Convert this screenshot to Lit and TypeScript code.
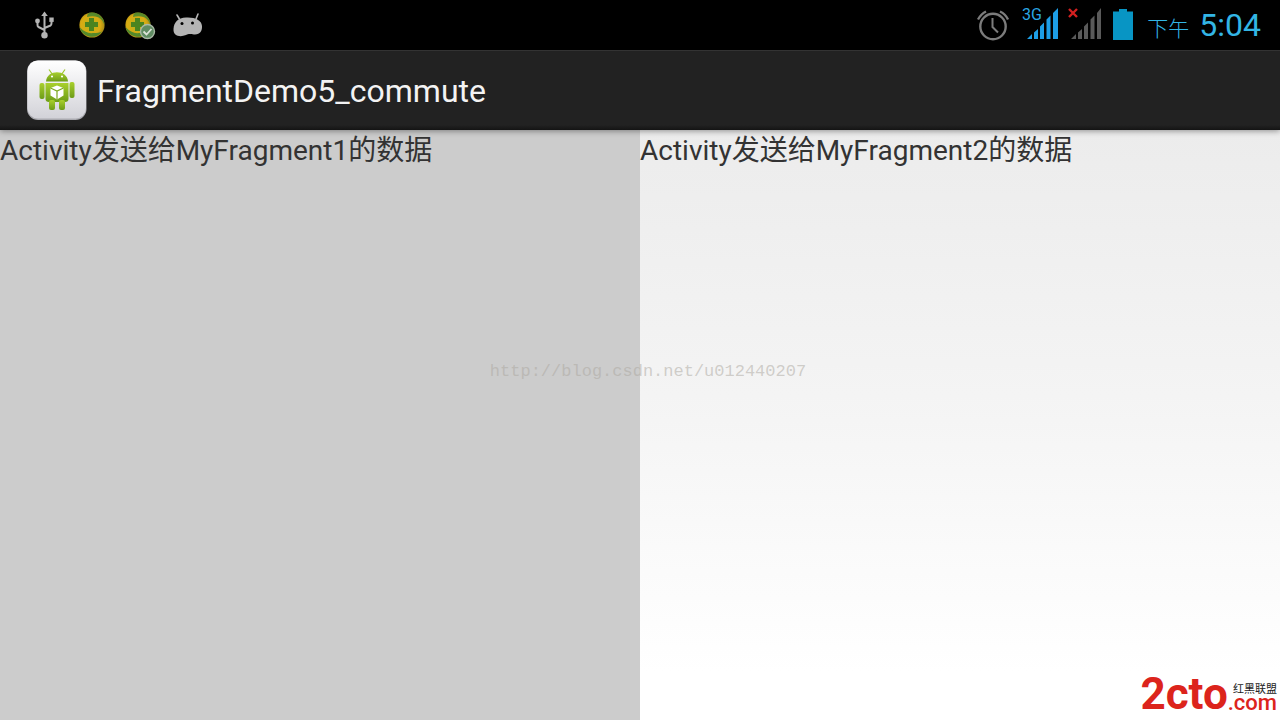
import { LitElement, html, css, svg } from "lit";
import { customElement, property } from "lit/decorators.js";

const ballIcon = svg`
  <circle cx="16" cy="16" r="12.6" fill="url(#ball)"/>
  <path d="M13 3.800A12.600 12.600 0 0 1 28.500 16Q26 8 19 7.500Q15 7 11 8Q11 5 13 3.800Z" fill="#3c8430" opacity=".8"/>
  <path d="M3.500 18Q10 25 17 24Q23 24 26 22.500A12.600 12.600 0 0 1 3.500 18Z" fill="#3c8430" opacity=".85"/>
  <path d="M13 9h5v4h4v5h-4v4h-5v-4h-4v-5h4z" fill="#4a8420"/>`;

const ballGradient = svg`
  <radialGradient id="ball" cx=".45" cy=".5" r=".55">
    <stop offset="0" stop-color="#b9b41c"/>
    <stop offset=".7" stop-color="#d9ab12"/>
    <stop offset="1" stop-color="#a58a16"/>
  </radialGradient>`;

@customElement("status-bar")
class StatusBar extends LitElement {
  static styles = css`
    :host {
      display: flex;
      align-items: center;
      justify-content: space-between;
      height: 50px;
      padding: 0 19px 0 28px;
      background: #000;
      color: #33b5e5;
    }
    .group { display: flex; align-items: center; }
    .notices { gap: 16px; }
    svg { display: block; flex: none; }
    .alarm { margin-right: 12px; }
    .mobile, .nosim { margin-right: 8px; }
    .battery { margin-right: 13px; }
    .clock {
      display: flex;
      align-items: baseline;
      gap: 10px;
      font: 32px/40px Roboto, "Noto Sans CJK SC", sans-serif;
    }
    .half { font: 300 21px/32px "Noto Sans CJK SC", sans-serif; }
  `;

  render() {
    return html`
      <div class="group notices">
        <svg width="32" height="32" viewBox="0 0 32 32" fill="none" stroke="#b4b4b4" stroke-width="2" aria-label="USB">
          <path d="M16.500 6V25M16.500 21L10.500 18Q9.500 17.500 9.500 16V12M16.500 19L22.500 16.500Q23.500 16 23.500 14V12"/>
          <path d="M16.500 2.500L19.800 7H13.200Z" fill="#b4b4b4" stroke="none"/>
          <circle cx="16.500" cy="26.200" r="3.200" fill="#b4b4b4" stroke="none"/>
          <circle cx="9.500" cy="12" r="2.400" fill="#b4b4b4" stroke="none"/>
          <path d="M21.300 8.500h4.400v4.400h-4.400z" fill="#b4b4b4" stroke="none"/>
        </svg>
        <svg width="32" height="32" viewBox="0 0 32 32"><defs>${ballGradient}</defs>${ballIcon}</svg>
        <svg width="32" height="32" viewBox="0 0 32 32">
          <defs>${ballGradient}</defs>
          <g transform="translate(-2 0)">${ballIcon}</g>
          <circle cx="23.500" cy="22.500" r="7" fill="#5f8c62" stroke="#a9b8a5" stroke-width="1.400"/>
          <path d="M19.500 22.500l3 3 5-5.500" fill="none" stroke="#dbe3d8" stroke-width="1.800"/>
        </svg>
        <svg width="32" height="32" viewBox="0 0 32 32" aria-label="Android">
          <path d="M5 6L8 11M26 5L24 10" stroke="#b4b4b4" stroke-width="1.600" stroke-linecap="round"/>
          <path d="M1.500 20C2 13 6 9 14 8.500C23 8 29.500 11 30 17C30.300 22 28 26 22 25.500C18 25 17 24.500 14 26C8 28.500 1 27 1.500 20Z" fill="#b4b4b4"/>
          <circle cx="10" cy="14.500" r="1.500"/><circle cx="20.500" cy="14" r="1.500"/>
        </svg>
      </div>
      <div class="group">
        <svg class="alarm" width="34" height="34" viewBox="0 0 34 34" fill="none" stroke="#7c7c7c" stroke-width="2.400" aria-label="Alarm">
          <circle cx="17" cy="18.500" r="12.700"/>
          <path d="M16.500 10v9l5.500 5.500" stroke-width="2"/>
          <path d="M2 11.500Q5 6 10 3.500M24 3.500Q29.500 6 32 11.500"/>
        </svg>
        <svg class="mobile" width="38" height="40" viewBox="0 -2 38 40" fill="#1d9ee6" aria-label="Signal">
          <text x="0" y="13" font-family="Roboto, sans-serif" font-size="16" fill="#2aa6e4">3G</text>
          <path d="M5 32L10 27V32ZM12 25.500l4-3.500V32H12ZM18 19.500l4-4V32h-4ZM24.500 12.500l4-4V32h-4ZM31 6l5-5V32h-5Z"/>
        </svg>
        <svg class="nosim" width="36" height="40" viewBox="0 -2 36 40" fill="#5a5a5a" aria-label="No signal">
          <path d="M3 32L8 27V32ZM10 25.500l4-3.500V32H10ZM16 19.500l4-4V32h-4ZM22.500 12.500l4-4V32h-4ZM29 6l4-5V32h-4Z"/>
          <path d="M1 2l8 8M9 2l-8 8" stroke="#d32020" stroke-width="2.400"/>
        </svg>
        <svg class="battery" width="22" height="32" viewBox="0 0 22 32" aria-label="Battery">
          <path d="M1 2.500H7V0H15V2.500H21V31H1Z" fill="#0895c4"/>
        </svg>
        <div class="clock"><span class="half">下午</span><time>5:04</time></div>
      </div>
    `;
  }
}

@customElement("action-bar")
class ActionBar extends LitElement {
  @property() heading = "";

  static styles = css`
    :host {
      display: flex;
      align-items: center;
      gap: 8px;
      box-sizing: border-box;
      height: 80px;
      padding: 0 25px;
      background: linear-gradient(#222 0 74px, #141414);
      border-top: 1px solid #333;
      box-shadow: 0 1px 6px rgba(0, 0, 0, 0.4);
      position: relative;
      z-index: 1;
    }
    svg { display: block; }
    h1 { margin: 0; color: #f3f3f3; font: 400 32px/40px Roboto, sans-serif; }
  `;

  render() {
    return html`
      <svg width="64" height="64" viewBox="0 1 64 64" aria-hidden="true">
        <defs>
          <linearGradient id="tile" x2="0" y2="1"><stop stop-color="#fff"/><stop offset="1" stop-color="#d2d2d8"/></linearGradient>
          <linearGradient id="green" x2="0" y2="1"><stop stop-color="#a9d02c"/><stop offset="1" stop-color="#6d9c18"/></linearGradient>
        </defs>
        <rect x="2" y="2.500" width="59.500" height="59.500" rx="11" fill="#aaaab0"/>
        <rect x="2.500" y="2.500" width="58.500" height="58" rx="10.500" fill="url(#tile)"/>
        <path d="M24 11.500l3.500 5M40 11.500l-3.500 5" stroke="#9cc62c" stroke-width="1.200"/>
        <g fill="url(#green)">
          <path d="M21 23.500C21.500 11 42.500 11 43 23.500Z"/>
          <path d="M20.500 25H43.500V41Q43.500 44 40 44H24Q20.500 44 20.500 41Z"/>
          <rect x="14.500" y="25" width="5" height="16" rx="2"/>
          <rect x="44.500" y="24" width="5" height="16" rx="2"/>
          <rect x="24" y="42" width="6" height="10" rx="2"/>
          <rect x="34" y="42" width="6" height="10" rx="2"/>
        </g>
        <circle cx="27" cy="18.500" r="1.100" fill="#fff"/><circle cx="37" cy="18.500" r="1.100" fill="#fff"/>
        <path d="M32 27.500L38.500 30V37.500L32 41.500L25.500 37.500V30Z" fill="#fff"/>
        <path d="M25.500 30L32 33L38.500 30M32 33V41.500" fill="none" stroke="#7da820" stroke-width="1.200"/>
      </svg>
      <h1>${this.heading}</h1>
    `;
  }
}

@customElement("app-root")
class AppRoot extends LitElement {
  static styles = css`
    :host {
      display: flex;
      flex-direction: column;
      min-height: 100vh;
      position: relative;
      overflow: hidden;
      background: #fff;
    }
    main { flex: 1; display: grid; grid-template-columns: 1fr 1fr; }
    .pane {
      color: #333;
      font: 28px/33px Roboto, "Noto Sans CJK SC", sans-serif;
      padding-top: 4px;
      background: linear-gradient(#ececec, #f4f4f4 45%, #fff 92%);
    }
    .pane.first { background: #ccc; }
    p { margin: 0; }
    .watermark {
      position: absolute;
      top: 362px;
      left: 0;
      right: 0;
      padding-left: 16px;
      text-align: center;
      font: 17px/20px "Liberation Mono", monospace;
      color: rgba(170, 166, 158, 0.5);
    }
    .brand {
      position: absolute;
      right: 3px;
      bottom: 8px;
      display: flex;
      align-items: flex-end;
      color: #dc241c;
      font-family: Roboto, sans-serif;
    }
    .big { font-size: 44px; line-height: 36px; font-weight: 700; }
    .side { display: flex; flex-direction: column; align-items: flex-end; }
    .cn { color: #222; font: 11px/12px "Noto Sans CJK SC", sans-serif; }
    .com { font-size: 22px; line-height: 18px; font-weight: 500; }
  `;

  render() {
    return html`
      <status-bar></status-bar>
      <action-bar heading="FragmentDemo5_commute"></action-bar>
      <main>
        <section class="pane first"><p>Activity发送给MyFragment1的数据</p></section>
        <section class="pane"><p>Activity发送给MyFragment2的数据</p></section>
      </main>
      <div class="watermark">http://blog.csdn.net/u012440207</div>
      <div class="brand">
        <span class="big">2cto</span>
        <span class="side"><span class="cn">红黑联盟</span><span class="com">.com</span></span>
      </div>
    `;
  }
}
